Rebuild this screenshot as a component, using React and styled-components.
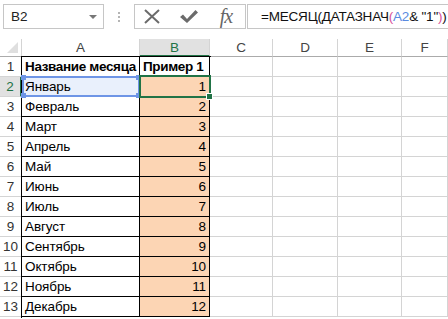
import styled, { createGlobalStyle } from "styled-components";

const GlobalStyle = createGlobalStyle`
  html, body {
    margin: 0;
    padding: 0;
    background: #fff;
  }
  body {
    font-family: "Liberation Sans", Arial, sans-serif;
    overflow: hidden;
  }
`;

const months = [
  "Январь",
  "Февраль",
  "Март",
  "Апрель",
  "Май",
  "Июнь",
  "Июль",
  "Август",
  "Сентябрь",
  "Октябрь",
  "Ноябрь",
  "Декабрь",
];

const columns = ["A", "B", "C", "D", "E", "F"];
const colTemplate = "22px 118px 70px 63px 65px 64px 1fr";

const Sheet = styled.div`
  width: 448px;
  height: 319px;
  display: flex;
  flex-direction: column;
`;

const FormulaBar = styled.div`
  display: flex;
  align-items: center;
  height: 39px;
  padding: 3px 0 9px 3px;
  box-sizing: border-box;
`;

const NameBox = styled.div`
  width: 101px;
  height: 25px;
  box-sizing: border-box;
  border: 1px solid #c6c6c6;
  display: flex;
  align-items: center;
  justify-content: space-between;
  padding: 0 6px 0 7px;
  font-size: 13.5px;
  color: #222;
`;

const Caret = styled.span`
  width: 0;
  height: 0;
  border-left: 4px solid transparent;
  border-right: 4px solid transparent;
  border-top: 4px solid #777;
`;

const Grip = styled.div`
  width: 30px;
  display: flex;
  flex-direction: column;
  align-items: center;
  gap: 2px;
  span {
    width: 2px;
    height: 2px;
    background: #b5b5b5;
  }
`;

const FuncBox = styled.div`
  width: 112px;
  height: 25px;
  box-sizing: border-box;
  border: 1px solid #c6c6c6;
  display: flex;
  align-items: center;
`;

const IconSlot = styled.div`
  width: ${(p) => p.$w}px;
  display: flex;
  justify-content: center;
  align-items: center;
`;

const Fx = styled.span`
  font-family: "Liberation Serif", "Times New Roman", serif;
  font-style: italic;
  font-size: 20px;
  color: #666;
  letter-spacing: -1px;
`;

const FormulaInput = styled.div`
  flex: 1;
  height: 25px;
  margin-left: 1px;
  box-sizing: border-box;
  border: 1px solid #c6c6c6;
  border-right: none;
  display: flex;
  align-items: center;
  padding-left: 13px;
  font-size: 13.5px;
  letter-spacing: -0.2px;
  color: #111;
  white-space: nowrap;
  overflow: hidden;
`;

const Tok = styled.span`
  color: ${(p) => p.$c || "inherit"};
  white-space: pre;
`;

const Grid = styled.div`
  position: relative;
  display: grid;
  grid-template-columns: ${colTemplate};
  grid-template-rows: 18px repeat(13, 20px);
`;

const Corner = styled.div`
  border-right: 1px solid #d4d4d4;
  border-bottom: 1px solid #ababab;
  position: relative;
  &::after {
    content: "";
    position: absolute;
    right: 3px;
    bottom: 3px;
    border-left: 11px solid transparent;
    border-bottom: 11px solid #dfdfdf;
  }
`;

const ColHead = styled.div`
  display: flex;
  align-items: center;
  justify-content: center;
  font-size: 13.5px;
  color: ${(p) => (p.$active ? "#217346" : "#444")};
  background: ${(p) => (p.$active ? "#e1e1e1" : "#fff")};
  border-right: 1px solid #d4d4d4;
  border-bottom: ${(p) => (p.$active ? "2px solid #217346" : "1px solid #ababab")};
  box-sizing: border-box;
`;

const RowHead = styled.div`
  display: flex;
  align-items: center;
  justify-content: center;
  font-size: 13.5px;
  color: ${(p) => (p.$active ? "#217346" : "#333")};
  background: ${(p) => (p.$active ? "#e1e1e1" : "#fff")};
  border-right: ${(p) => (p.$active ? "2px solid #217346" : "1px solid #ababab")};
  border-bottom: 1px solid #d4d4d4;
  box-sizing: border-box;
`;

const Cell = styled.div`
  display: flex;
  align-items: center;
  justify-content: ${(p) => (p.$num ? "flex-end" : "flex-start")};
  padding: 0 3px 0 3px;
  font-size: 13.5px;
  letter-spacing: ${(p) => (p.$bold ? "-0.35px" : "-0.1px")};
  font-weight: ${(p) => (p.$bold ? 700 : 400)};
  color: #000;
  white-space: nowrap;
  overflow: hidden;
  background: ${(p) => p.$bg || "#fff"};
  border-right: 1px solid ${(p) => (p.$table ? "#000" : "#d4d4d4")};
  border-bottom: 1px solid ${(p) => (p.$table ? "#000" : "#d4d4d4")};
  box-sizing: border-box;
`;

const RefBox = styled.div`
  position: absolute;
  left: 22px;
  top: 37px;
  width: 118px;
  height: 21px;
  box-sizing: border-box;
  border: 2px solid #6e95e6;
  pointer-events: none;
`;

const Handle = styled.span`
  position: absolute;
  width: 5px;
  height: 5px;
  background: ${(p) => p.$c};
  ${(p) => (p.$top ? "top: -3px;" : "bottom: -3px;")}
  ${(p) => (p.$left ? "left: -3px;" : "right: -3px;")}
`;

const ActiveBox = styled.div`
  position: absolute;
  left: 139px;
  top: 36px;
  width: 72px;
  height: 23px;
  box-sizing: border-box;
  border: 2px solid #217346;
  pointer-events: none;
`;

const Fill = styled.span`
  position: absolute;
  right: -4px;
  bottom: -4px;
  width: 5px;
  height: 5px;
  background: #217346;
  border: 1px solid #fff;
`;

const TableLeftEdge = styled.div`
  position: absolute;
  left: 21px;
  top: 18px;
  width: 1px;
  height: 261px;
  background: #000;
  pointer-events: none;
`;

const TableTopEdge = styled.div`
  position: absolute;
  left: 21px;
  top: 17px;
  width: 190px;
  height: 1px;
  background: #000;
  pointer-events: none;
`;

export default function App() {
  const rows = [
    { a: "Название месяца", b: "Пример 1", head: true },
    ...months.map((m, i) => ({ a: m, b: String(i + 1) })),
  ];

  return (
    <Sheet>
      <GlobalStyle />
      <FormulaBar>
        <NameBox>
          <span>B2</span>
          <Caret />
        </NameBox>
        <Grip>
          <span />
          <span />
          <span />
        </Grip>
        <FuncBox>
          <IconSlot $w={34}>
            <svg width="18" height="15" viewBox="0 0 18 15">
              <path d="M2 1 L16 14 M16 1 L2 14" stroke="#6b6b6b" strokeWidth="2" fill="none" />
            </svg>
          </IconSlot>
          <IconSlot $w={40}>
            <svg width="20" height="15" viewBox="0 0 20 15">
              <path d="M1 8 L4 5.5 L8 10 L16.5 1 L19 3.5 L8 14 Z" fill="#6b6b6b" />
            </svg>
          </IconSlot>
          <IconSlot $w={34}>
            <Fx>fx</Fx>
          </IconSlot>
        </FuncBox>
        <FormulaInput>
          <Tok>=МЕСЯЦ(ДАТАЗНАЧ</Tok>
          <Tok $c="#d8509a">(</Tok>
          <Tok $c="#5a8ae0">A2</Tok>
          <Tok>&amp; "1"</Tok>
          <Tok $c="#d8509a">)</Tok>
          <Tok>)</Tok>
        </FormulaInput>
      </FormulaBar>
      <Grid>
        <Corner />
        {columns.map((c) => (
          <ColHead key={c} $active={c === "B"}>
            {c}
          </ColHead>
        ))}
        {rows.map((r, i) => (
          <Row key={i} index={i + 1} row={r} />
        ))}
        <TableTopEdge />
        <TableLeftEdge />
        <RefBox>
          <Handle $c="#6e95e6" $top $left />
          <Handle $c="#6e95e6" $top />
          <Handle $c="#6e95e6" $left />
          <Handle $c="#6e95e6" />
        </RefBox>
        <ActiveBox>
          <Fill />
        </ActiveBox>
      </Grid>
    </Sheet>
  );
}

function Row({ index, row }) {
  const refCell = index === 2;
  return (
    <>
      <RowHead $active={refCell}>{index}</RowHead>
      <Cell $table $bold={row.head} $bg={refCell ? "#e9f0fc" : "#fff"}>
        {row.a}
      </Cell>
      <Cell $table $bold={row.head} $num={!row.head} $bg={row.head ? "#fff" : "#fcd5b4"}>
        {row.b}
      </Cell>
      <Cell />
      <Cell />
      <Cell />
      <Cell />
    </>
  );
}
